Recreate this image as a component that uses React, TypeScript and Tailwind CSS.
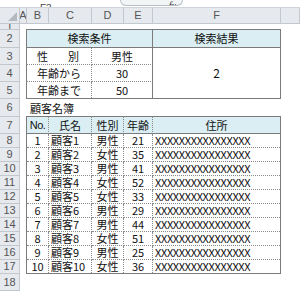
import React from "react";

const data: [number, string, string, number][] = [
  [1, "顧客1", "男性", 21],
  [2, "顧客2", "女性", 35],
  [3, "顧客3", "男性", 41],
  [4, "顧客4", "女性", 52],
  [5, "顧客5", "女性", 33],
  [6, "顧客6", "男性", 29],
  [7, "顧客7", "男性", 44],
  [8, "顧客8", "女性", 51],
  [9, "顧客9", "男性", 25],
  [10, "顧客10", "女性", 36],
];

const colHeaders = ["A", "B", "C", "D", "E", "F", ""];

export default function App() {
  const rows = Array.from({ length: 18 }, (_, i) => i + 1);
  const hd = "bg-[#e6e9ee] border-[#c3c8cf] flex items-center justify-center text-[11px] text-[#555] font-['Liberation_Sans',sans-serif] overflow-hidden";
  const dot = "border-[#8a8a8a]";
  return (
    <div className="w-[300px] h-[291px] overflow-hidden bg-white flex flex-col font-['Noto_Sans_CJK_JP',sans-serif] text-[11px] text-[#111] leading-none">
      {/* formula bar remnant */}
      <div className="h-[8px] shrink-0 flex items-end overflow-hidden border-b border-[#cfd4da]">
        <div className="ml-[40px] w-[12px] h-[8px] overflow-hidden flex items-end">
          <span className="text-[10px] text-[#444] leading-none -mb-[7px] font-['Liberation_Sans',sans-serif]">F3</span>
        </div>
        <div className="ml-[68px] w-[63px] h-[6px] mb-[1px] border border-t-0 border-[#b9bec5] rounded-b-[6px] bg-[#f3f4f6] flex justify-end items-end pr-[6px] overflow-hidden">
          <span className="text-[10px] italic text-[#333] leading-none -mb-[6px] font-['Liberation_Serif',serif]">fx</span>
        </div>
      </div>

      <div className="grid grid-cols-[20px_7px_22px_43px_32px_29px_128px_1fr] grid-rows-[16px_6px_18px_17px_17px_17px_18px_17px_repeat(10,14px)_17px]">
        {/* corner */}
        <div className={`${hd} border-r border-b relative`}>
          <svg className="absolute right-[2px] bottom-[2px]" width="9" height="9" viewBox="0 0 9 9">
            <polygon points="9,0 9,9 0,9" fill="#b4b9c0" />
          </svg>
        </div>
        {colHeaders.map((c, i) => (
          <div key={c + i} className={`${hd} border-r border-b`}>
            {c}
          </div>
        ))}
        {rows.map((r) => (
          <div key={r} className={`${hd} border-r border-b col-start-1`} style={{ gridRow: r + 1 }}>
            {r}
          </div>
        ))}

        {/* search block */}
        <div className="col-[3/8] row-[3/7] -ml-px -mt-px border border-[#7b7b7b] grid grid-cols-[65px_61px_1fr] grid-rows-[18px_17px_17px_1fr] bg-white">
          <div className="col-span-2 bg-[#daeef3] border-b border-r border-[#7b7b7b] flex items-center justify-center">検索条件</div>
          <div className="bg-[#daeef3] border-b border-[#7b7b7b] flex items-center justify-center">検索結果</div>

          <div className={`border-r border-b border-dotted ${dot} flex items-center justify-between pl-[10px] pr-[12px]`}>
            <span>性</span>
            <span>別</span>
          </div>
          <div className={`border-b ${dot} [border-bottom-style:dotted] border-r border-r-[#7b7b7b] flex items-center justify-center`}>男性</div>
          <div className="row-[2/5] col-start-3 flex items-center justify-center text-[12px]">2</div>

          <div className={`col-start-1 border-r border-b border-dotted ${dot} flex items-center justify-center`}>年齢から</div>
          <div className={`border-b ${dot} [border-bottom-style:dotted] border-r border-r-[#7b7b7b] flex items-center justify-center`}>30</div>

          <div className={`col-start-1 border-r border-dotted ${dot} flex items-center justify-center`}>年齢まで</div>
          <div className="border-r border-[#7b7b7b] flex items-center justify-center">50</div>
        </div>

        {/* title */}
        <div className="col-[3/8] row-[7] flex items-center pl-[3px] pt-[1px]">顧客名簿</div>

        {/* customer block */}
        <div className="col-[3/8] row-[8/19] -ml-px -mt-px border border-[#7b7b7b] grid grid-cols-[22px_43px_32px_29px_1fr] grid-rows-[17px_repeat(9,14px)_1fr] bg-white">
          {["No.", "氏名", "性別", "年齢"].map((h) => (
            <div key={h} className={`bg-[#daeef3] border-r border-dotted ${dot} border-b border-b-[#7b7b7b] [border-bottom-style:solid] flex items-center justify-center ${h === "No." ? "font-['Liberation_Sans_Narrow','Liberation_Sans',sans-serif] tracking-[-0.5px]" : ""}`}>
              {h}
            </div>
          ))}
          <div className="bg-[#daeef3] border-b border-[#7b7b7b] flex items-center justify-center">住所</div>
          {data.map(([n, name, sex, age], i) => {
            const last = i === data.length - 1;
            const b = last ? "" : "border-b";
            return (
              <React.Fragment key={n}>
                <div className={`border-r ${b} border-dotted ${dot} flex items-center justify-center`}>{n}</div>
                <div className={`border-r ${b} border-dotted ${dot} flex items-center pl-[2px]`}>{name}</div>
                <div className={`border-r ${b} border-dotted ${dot} flex items-center justify-center`}>{sex}</div>
                <div className={`border-r ${b} border-dotted ${dot} flex items-center justify-center`}>{age}</div>
                <div className={`${b} border-dotted ${dot} flex items-center pl-[2px] tracking-[-0.35px]`}>XXXXXXXXXXXXXXXX</div>
              </React.Fragment>
            );
          })}
        </div>
      </div>
    </div>
  );
}
